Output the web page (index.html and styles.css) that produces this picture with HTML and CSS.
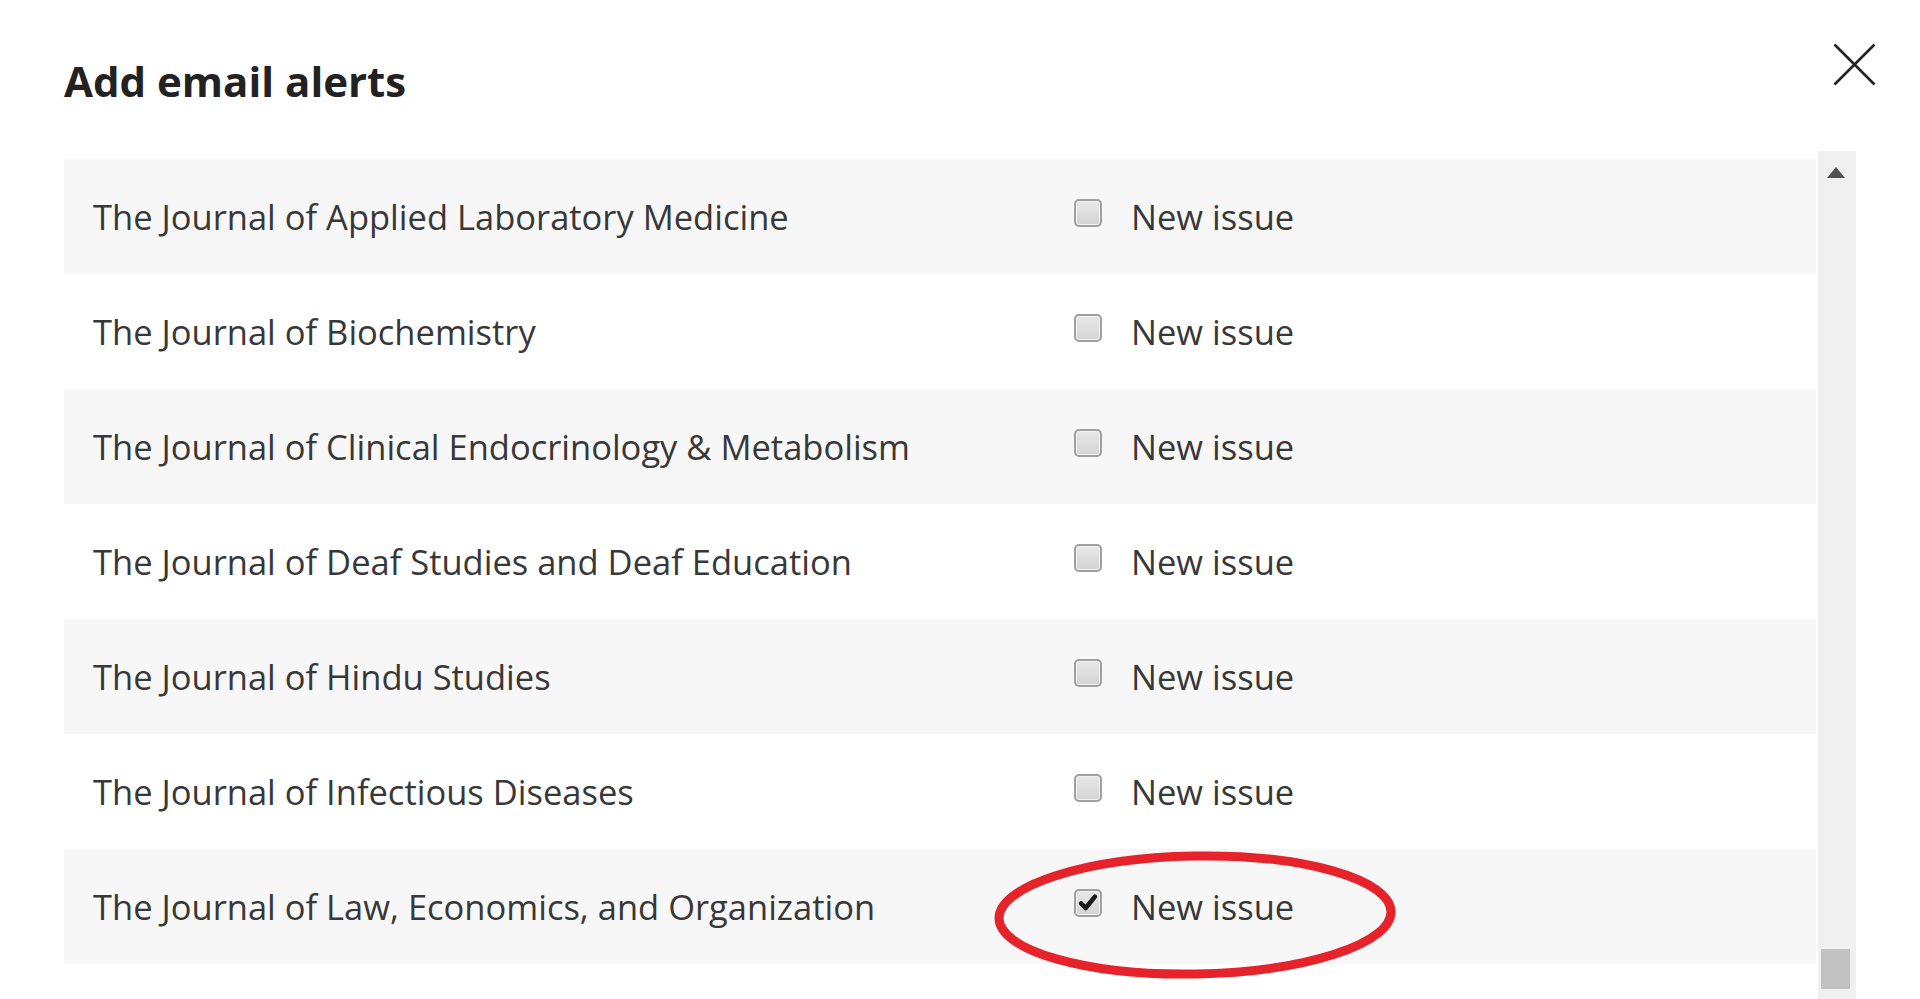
FILE: index.html
```html
<!DOCTYPE html>
<html lang="en">
<head>
<meta charset="utf-8">
<title>Add email alerts</title>
<link rel="stylesheet" href="styles.css">
</head>
<body>
<div class="modal">
  <div class="header">
    <h2 class="title">Add email alerts</h2>
    <button class="close" aria-label="Close">
      <svg viewBox="0 0 43 43" width="43" height="43"><path d="M1.5 1.5 L41.5 41.5 M41.5 1.5 L1.5 41.5" stroke="#222" stroke-width="2.6" fill="none"/></svg>
    </button>
  </div>
  <div class="list">
    <div class="rows">
      <div class="row">
        <div class="name">The Journal of Applied Laboratory Medicine</div>
        <label class="opt"><span class="box"></span><span>New issue</span></label>
      </div>
      <div class="row">
        <div class="name">The Journal of Biochemistry</div>
        <label class="opt"><span class="box"></span><span>New issue</span></label>
      </div>
      <div class="row">
        <div class="name">The Journal of Clinical Endocrinology &amp; Metabolism</div>
        <label class="opt"><span class="box"></span><span>New issue</span></label>
      </div>
      <div class="row">
        <div class="name">The Journal of Deaf Studies and Deaf Education</div>
        <label class="opt"><span class="box"></span><span>New issue</span></label>
      </div>
      <div class="row">
        <div class="name">The Journal of Hindu Studies</div>
        <label class="opt"><span class="box"></span><span>New issue</span></label>
      </div>
      <div class="row">
        <div class="name">The Journal of Infectious Diseases</div>
        <label class="opt"><span class="box"></span><span>New issue</span></label>
      </div>
      <div class="row marked">
        <div class="name">The Journal of Law, Economics, and Organization</div>
        <label class="opt"><span class="box checked"><svg viewBox="0 0 24 24" width="22" height="22"><path d="M4.5 12.5 L9.5 17.5 L19.5 5" stroke="#1a1a1a" stroke-width="5" fill="none" stroke-linecap="round" stroke-linejoin="round"/></svg></span><span>New issue</span></label>
        <svg class="ring" viewBox="0 0 404 130" width="404" height="130"><ellipse cx="202" cy="65" rx="196" ry="59" transform="rotate(-1 202 65)" fill="none" stroke="#e6232a" stroke-width="9"/></svg>
      </div>
      <div class="row"></div>
    </div>
    <div class="scrollbar">
      <span class="arrow"></span>
      <span class="track"></span>
      <span class="thumb"></span>
    </div>
  </div>
</div>
</body>
</html>
```
FILE: styles.css
```css
html, body {
  margin: 0;
  padding: 0;
  background: #ffffff;
  overflow: hidden;
}
body {
  font-family: "Open Sans", "Liberation Sans", sans-serif;
  color: #333333;
}
.modal {
  width: 1920px;
  height: 999px;
  overflow: hidden;
}
.header {
  box-sizing: border-box;
  height: 151px;
  display: flex;
  justify-content: space-between;
  align-items: flex-start;
  padding: 43px 44px 0 64px;
}
.title {
  margin: 17px 0 0;
  font-size: 42px;
  line-height: 1;
  font-weight: 700;
  color: #222222;
}
.close {
  width: 43px;
  height: 43px;
  padding: 0;
  border: 0;
  background: transparent;
  display: block;
}
.close svg {
  display: block;
}
.list {
  display: flex;
  margin: 0 64px;
  height: 848px;
}
.rows {
  flex: 1;
  padding-top: 8px;
  overflow: hidden;
}
.row {
  height: 115px;
  display: flex;
  align-items: center;
  font-size: 34.5px;
  line-height: 1;
  color: #383838;
}
.row:nth-child(odd) {
  background: #f7f7f7;
}
.name {
  box-sizing: border-box;
  width: 1010px;
  padding: 2px 0 0 29px;
  white-space: nowrap;
}
.opt {
  display: flex;
  align-items: center;
  gap: 29px;
  padding-top: 2px;
}
.box {
  box-sizing: border-box;
  width: 28px;
  height: 28px;
  border: 2px solid #a0a0a0;
  border-radius: 5px;
  background: linear-gradient(#e8e8e8, #d4d4d4);
  box-shadow: inset 0 0 0 1px #f2f2f2;
  margin-bottom: 9px;
  display: flex;
  align-items: center;
  justify-content: center;
}
.box svg {
  display: block;
}
.marked {
  position: relative;
}
.ring {
  position: absolute;
  left: 929px;
  top: 1px;
  pointer-events: none;
}
.scrollbar {
  width: 38px;
  margin-left: 2px;
  background: #f0f0f0;
  display: flex;
  flex-direction: column;
  align-items: center;
}
.arrow {
  margin-top: 16px;
  margin-right: 3px;
  width: 0;
  height: 0;
  border-left: 9.5px solid transparent;
  border-right: 9.5px solid transparent;
  border-bottom: 11px solid #505050;
}
.track {
  flex: 1;
}
.thumb {
  width: 29px;
  height: 40px;
  margin-bottom: 10px;
  margin-right: 3px;
  background: #c1c1c1;
}
```
